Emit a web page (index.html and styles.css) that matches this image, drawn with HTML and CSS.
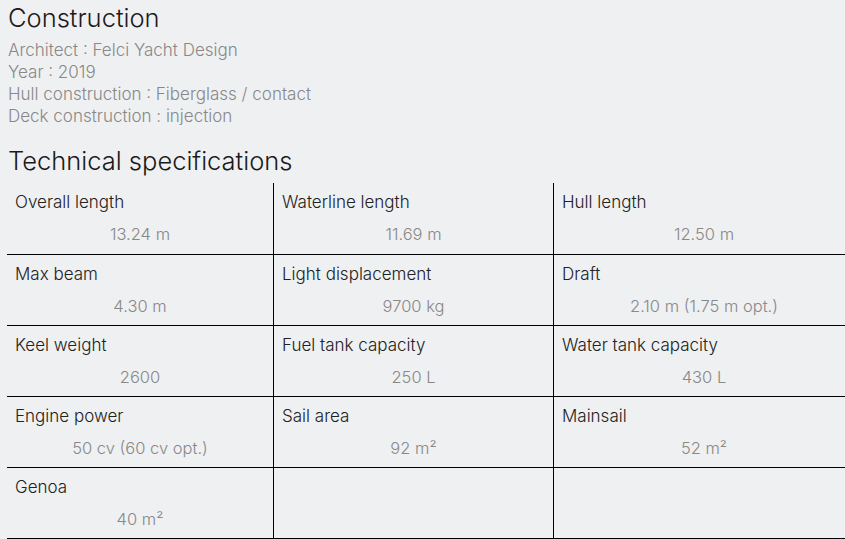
FILE: index.html
```html
<!DOCTYPE html>
<html>
<head>
<meta charset="utf-8">
<link rel="stylesheet" href="styles.css">
</head>
<body>
<div class="page">
  <h2 class="title">Construction</h2>
  <div class="info">
    <div>Architect : Felci Yacht Design</div>
    <div>Year : 2019</div>
    <div>Hull construction : Fiberglass / contact</div>
    <div>Deck construction : injection</div>
  </div>
  <h2 class="title title-specs">Technical specifications</h2>
  <div class="specs">
    <div class="cell"><div class="label">Overall length</div><div class="value">13.24 m</div></div>
    <div class="cell"><div class="label">Waterline length</div><div class="value">11.69 m</div></div>
    <div class="cell"><div class="label">Hull length</div><div class="value">12.50 m</div></div>
    <div class="cell"><div class="label">Max beam</div><div class="value">4.30 m</div></div>
    <div class="cell"><div class="label">Light displacement</div><div class="value">9700 kg</div></div>
    <div class="cell"><div class="label">Draft</div><div class="value">2.10 m (1.75 m opt.)</div></div>
    <div class="cell"><div class="label">Keel weight</div><div class="value">2600</div></div>
    <div class="cell"><div class="label">Fuel tank capacity</div><div class="value">250 L</div></div>
    <div class="cell"><div class="label">Water tank capacity</div><div class="value">430 L</div></div>
    <div class="cell"><div class="label">Engine power</div><div class="value">50 cv (60 cv opt.)</div></div>
    <div class="cell"><div class="label">Sail area</div><div class="value">92 m²</div></div>
    <div class="cell"><div class="label">Mainsail</div><div class="value">52 m²</div></div>
    <div class="cell"><div class="label">Genoa</div><div class="value">40 m²</div></div>
    <div class="cell"></div>
    <div class="cell"></div>
  </div>
</div>
</body>
</html>
```

FILE: styles.css
```css
html, body {
  margin: 0;
  padding: 0;
  background: #eff0f2;
  overflow: hidden;
}
body {
  font-family: "Inter", "Liberation Sans", sans-serif;
  font-weight: 300;
  color: #222;
}
.page {
  padding: 3px 0 0 8px;
}
.title {
  margin: 0;
  font-size: 25.5px;
  font-weight: 300;
  line-height: 30px;
  color: #1a1a1a;
}
.info {
  margin-top: 6px;
  font-size: 17px;
  line-height: 22px;
  color: #888;
}
.title-specs {
  margin-top: 19px;
}
.specs {
  margin: 7px 0 0 -1px;
  display: grid;
  grid-template-columns: 267px 280px 300px;
  grid-template-rows: 72px 71px 71px 71px 71px;
  width: 847px;
}
.cell {
  border-bottom: 1px solid #000;
  border-right: 1px solid #000;
  padding: 9px 0 0 8px;
}
.cell:nth-child(3n) {
  border-right: none;
}
.label {
  font-size: 17px;
  line-height: 20px;
  color: #222;
  font-weight: 350;
}
.value {
  margin-top: 12px;
  text-align: center;
  font-size: 16.5px;
  line-height: 20px;
  color: #888;
  padding-right: 8px;
}
```
